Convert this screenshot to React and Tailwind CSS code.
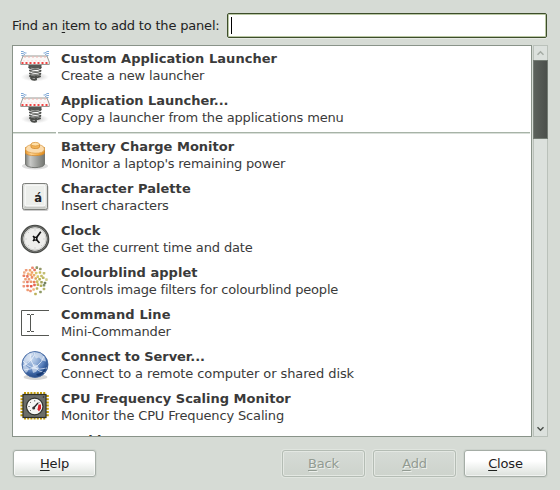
import React from "react";

const svgProps = { width: 32, height: 32, viewBox: "0 0 32 32", className: "block shrink-0" };

function LauncherIcon() {
  return (
    <svg {...svgProps}>
      <defs>
        <radialGradient id="springShadow">
          <stop offset="0" stopColor="#999" stopOpacity=".6" />
          <stop offset="1" stopColor="#aaa" stopOpacity="0" />
        </radialGradient>
      </defs>
      <ellipse cx="16" cy="26" rx="14" ry="4.5" fill="url(#springShadow)" />
      <g fill="none" stroke="#7fa8d6" strokeWidth="1">
        <path d="M2 .5h2l2 1.500h1.500M2 2.500h2l2 1.200M2.500 4.500h2M30 .5h-2l-2 1.500h-1.500M30 2.500h-2l-2 1.200M29.500 4.500h-2" />
      </g>
      <path d="M9.500 13.500h13v3.500h-13z" fill="#555753" />
      <g fill="none" strokeLinecap="round">
        <path d="M10.500 16.500q5.500 3 11 .3M11 19.500q5 3 10.500 .3M11 22.500q5 3 10.300 .3M11 25q5 2.500 10 .3M12 27q1 2 4 1.700M17 25v3.500" stroke="#4a4c49" strokeWidth="2" />
        <path d="M12 17.200q4 1.500 8 .2M12 20.200q4 1.500 8 .2M12 23.200q4 1.500 8 .2" stroke="#c4c6c2" strokeWidth=".7" />
      </g>
      <path d="M4 5h24l2.300 6v2.500H1.700V11z" fill="#fbf8f7" stroke="#989a96" />
      <path d="M5 6h22" stroke="#f3b4b0" strokeDasharray="2 2" />
      <path d="M2.500 12h27" stroke="#ef4545" strokeWidth="1.800" strokeDasharray="2 2" />
      <path d="M4 9.700h24" stroke="#f7d5d2" strokeWidth=".6" strokeDasharray="2 2" />
    </svg>
  );
}

function BatteryIcon() {
  return (
    <svg {...svgProps}>
      <defs>
        <linearGradient id="cell">
          <stop offset="0" stopColor="#7d7f7b" />
          <stop offset=".25" stopColor="#c9cac8" />
          <stop offset=".65" stopColor="#999b97" />
          <stop offset="1" stopColor="#747672" />
        </linearGradient>
        <linearGradient id="copper">
          <stop offset="0" stopColor="#e8962a" />
          <stop offset=".3" stopColor="#ffd391" />
          <stop offset=".7" stopColor="#f5a93c" />
          <stop offset="1" stopColor="#dd8a20" />
        </linearGradient>
      </defs>
      <ellipse cx="16" cy="27" rx="13" ry="3.500" fill="#ddd" />
      <path d="M6.500 9v16c0 4.800 19 4.800 19 0V9z" fill="url(#cell)" stroke="#6d6f6b" strokeWidth=".9" />
      <path d="M6.500 8.500v5.500c0 3.500 19 3.500 19 0V8.500z" fill="url(#copper)" stroke="#d0852a" strokeWidth=".7" />
      <path d="M6.500 10c0-6.300 19-6.300 19 0s-19 5-19 0z" fill="#fbdcae" stroke="#dca04e" strokeWidth=".8" />
      <path d="M12 5.500v2.500c0 2 8.500 2 8.500 0V5.500z" fill="#f4b558" stroke="#cf862a" strokeWidth=".8" />
      <ellipse cx="16.250" cy="5.200" rx="4.200" ry="1.800" fill="#ffe0a9" stroke="#d9953a" strokeWidth=".8" />
    </svg>
  );
}

function KeyIcon() {
  return (
    <svg {...svgProps}>
      <rect x="3.500" y="4" width="26" height="26" rx="2" fill="#ccc" />
      <rect x="3.500" y="2.500" width="25" height="26" rx="2" fill="#dcdedb" stroke="#7d7f7b" />
      <path d="M4.500 27.500l2-3h18l3 3z" fill="#c5c7c3" />
      <rect x="6" y="4" width="20" height="21" rx="1.500" fill="#eceeeb" stroke="#fff" />
      <text x="15.300" y="21" fontFamily="DejaVu Sans" fontSize="13" fontWeight="bold" textLength="7.800" lengthAdjust="spacingAndGlyphs" fill="#222">á</text>
    </svg>
  );
}

function ClockIcon() {
  return (
    <svg {...svgProps}>
      <circle cx="16" cy="16" r="13" fill="#eeeeec" stroke="#484a47" strokeWidth="2.600" />
      <circle cx="16" cy="16" r="12.800" fill="none" stroke="#858783" strokeWidth=".7" />
      <circle cx="16" cy="16" r="11" fill="none" stroke="#c5c7c3" strokeWidth=".8" />
      <path d="M16 6.500v1M16 24.500v1M6.500 16h1M24.500 16h1M9.300 9.300l.7.700M22 22l.7.700M9.300 22.700l.7-.7" stroke="#aaa" strokeWidth=".7" />
      <path d="M16.500 16l5.300-7.200M16.500 15.500l4 4.500M14 13l2.500 2.500M14 18l2.500-2.500" stroke="#111" strokeWidth="1.700" />
      <rect x="14.500" y="13.700" width="4" height="4" fill="#111" />
      <rect x="15.800" y="15.200" width="1.200" height="1.200" fill="#fff" />
    </svg>
  );
}

const DOTS = [
  [13.500, 2.800, "#e98a71"], [17.800, 2.600, "#8d9867"], [21.300, 4, "#96996a"],
  [7.200, 5.200, "#ee9b79"], [11, 5.300, "#f0a46a"], [15.600, 5, "#e6755f"],
  [5.300, 7.500, "#efac82"], [9.200, 8.800, "#f2b17d"], [13, 7.500, "#f0a05f"], [17.200, 8, "#d5ca74"], [21, 7.500, "#c6bb5a"], [25, 8.200, "#c2bd73"],
  [4.900, 10.800, "#ea8362"], [8.400, 11.400, "#e67560"], [11.800, 9.800, "#f2ad6d"], [15, 10.200, "#eeab68"], [18.800, 11.600, "#d4c66a"], [22.500, 11, "#c8bc69"],
  [6.500, 14.200, "#eea07a"], [10, 14.300, "#f0a075"], [13, 12.400, "#ec8c66"], [16.700, 13.500, "#dda85c"], [20.600, 14.200, "#b6ae4d"], [24.200, 12.800, "#bcb864"], [27.500, 14.600, "#d1cd8a"],
  [4.800, 17, "#f0b492"], [8.400, 17, "#e77b65"], [12, 16.800, "#ee9c70"], [15.200, 17, "#e98059"], [18.200, 16.600, "#c9bf63"], [22.500, 17.200, "#a5a35b"], [26, 18, "#768360"],
  [4.800, 21.200, "#ee9575"], [8.500, 21, "#e86e58"], [12.200, 21.200, "#e55645"], [15.500, 20, "#e86754"], [18.900, 19.600, "#bdb255"], [22, 20.700, "#b2ae53"], [25, 20.300, "#81906a"],
  [8.700, 25, "#ef9e75"], [11.500, 26, "#ec9071"], [14.600, 24.500, "#f1b17a"], [18, 23.500, "#bdb462"], [21.500, 27, "#8e9a67"], [25, 24, "#b7b66d"], [16.500, 29, "#bdb25b"],
];

function ColourDotsIcon() {
  return (
    <svg {...svgProps}>
      {DOTS.map(([x, y, fill], i) => (
        <rect key={i} x={x - 1.300} y={y - 1.300} width="2.600" height="2.600" rx=".7" fill={fill} />
      ))}
    </svg>
  );
}

function CommandIcon() {
  return (
    <svg {...svgProps}>
      <path d="M30 3.500H2.500v25H30" fill="none" stroke="#555753" />
      <path d="M8 7.500h3M12 7.500h3M8 24.500h3M12 24.500h3M11.500 8v16" fill="none" stroke="#555753" />
    </svg>
  );
}

function GlobeIcon() {
  return (
    <svg {...svgProps}>
      <defs>
        <radialGradient id="ocean" cx=".4" cy=".3" r=".75">
          <stop offset="0" stopColor="#7ea5d8" />
          <stop offset=".6" stopColor="#4a74b4" />
          <stop offset="1" stopColor="#1f427c" />
        </radialGradient>
        <radialGradient id="gloss" cx=".35" cy=".25" r=".6">
          <stop offset="0" stopColor="#fff" stopOpacity=".55" />
          <stop offset="1" stopColor="#fff" stopOpacity="0" />
        </radialGradient>
      </defs>
      <ellipse cx="16.500" cy="28" rx="12" ry="3" fill="#d5d5d5" />
      <circle cx="16" cy="15.500" r="13" fill="url(#ocean)" stroke="#3f629c" strokeWidth=".8" />
      <path d="M5 10l4-5 6-2-1 3-3 2 1 3-4 2-1 4 3 2-1 3-2 2-3-4zM17 3.500l5 1 4 4 1 4-4-1-3-3-3 1-2-3zM14 15l4 1 2 3-3 4-3 1-1-4z" fill="#c9d8ec" opacity=".75" />
      <path d="M4 17q11-6 12-14M5 21q16-1 20-14M11 5q1 16 15 19M4 12q9 11 24 7" fill="none" stroke="#edf4ff" strokeWidth=".9" opacity=".8" />
      <path d="M17 25q8-1 10-8-1 8-8 10z" fill="#173a73" />
      <circle cx="16" cy="15.500" r="12.500" fill="url(#gloss)" />
    </svg>
  );
}

function CpuIcon() {
  return (
    <svg {...svgProps}>
      <path d="M5 2.500h22M5 27h22" stroke="#c49d08" strokeWidth="3" strokeDasharray="2 1.200" />
      <path d="M3 4v22M28.300 4v22" stroke="#c49d08" strokeWidth="3" strokeDasharray="2 1.200" />
      <rect x="4" y="3.500" width="23" height="23" fill="#6b6d68" stroke="#2e302d" strokeWidth="1.200" />
      <circle cx="15.700" cy="15.500" r="8.300" fill="#f5f5f3" stroke="#31332f" strokeWidth="1.200" />
      <path d="M15.700 9v1.500M11 11l1 1M9.300 15.500h1.500M20.500 11l-1 1M11 20l1-1" stroke="#777" />
      <path d="M19.500 13.500h2.500v4l-2 3-1.500-2z" fill="#d6222a" />
      <path d="M15 16.500l4-4.500" stroke="#222" strokeWidth="1.300" />
      <circle cx="14.700" cy="17" r="1.500" fill="#333" />
      <circle cx="24.500" cy="6" r=".8" fill="#2e302d" />
    </svg>
  );
}

// Each entry: title, description, icon, title tracking, description tracking.
const LAUNCHERS = [
  ["Custom Application Launcher", "Create a new launcher", LauncherIcon, "tracking-[0.04px]", "tracking-[-0.19px]"],
  ["Application Launcher...", "Copy a launcher from the applications menu", LauncherIcon, "tracking-[-0.03px]", "tracking-[-0.17px]"],
];

const APPLETS = [
  ["Battery Charge Monitor", "Monitor a laptop's remaining power", BatteryIcon, "", "tracking-[-0.21px]"],
  ["Character Palette", "Insert characters", KeyIcon, "tracking-[0.05px]", "tracking-[-0.16px]"],
  ["Clock", "Get the current time and date", ClockIcon, "", "tracking-[-0.12px]"],
  ["Colourblind applet", "Controls image filters for colourblind people", ColourDotsIcon, "tracking-[0.05px]", "tracking-[-0.2px]"],
  ["Command Line", "Mini-Commander", CommandIcon, "tracking-[0.12px]", "tracking-[-0.12px]"],
  ["Connect to Server...", "Connect to a remote computer or shared disk", GlobeIcon, "tracking-[-0.06px]", "tracking-[-0.09px]"],
  ["CPU Frequency Scaling Monitor", "Monitor the CPU Frequency Scaling", CpuIcon, "", "tracking-[-0.15px]"],
  ["Deskbar", "", null, "", ""],
];

function Row({ item: [title, text, Icon, titleTracking, textTracking] }) {
  return (
    <li className="flex h-[42px] shrink-0 items-center pl-1.5">
      <div className="w-[42px] shrink-0">{Icon && <Icon />}</div>
      <div className="h-[34px] whitespace-nowrap leading-[17px]">
        <div className={"font-bold " + titleTracking}>{title}</div>
        <div className={textTracking}>{text}</div>
      </div>
    </li>
  );
}

function Button({ label, disabled = false }) {
  const look = disabled
    ? "border-[#b4bcb4] bg-linear-to-b from-[#d6dbd6] to-[#cdd3cc] text-[#929b92] shadow-[0_0_0_1px_#e0e5df,inset_0_0_0_1px_#e4e8e3] [text-shadow:1px_1px_0_#edf0ec]"
    : "border-[#a5ada6] bg-linear-to-b from-white from-40% to-[#dce1dc] text-[#1e211e] shadow-[0_0_0_1px_#ccd2cc,inset_0_0_0_1px_#ffffff99]";
  return (
    <button disabled={disabled} className={"flex h-[27px] w-[83px] items-center justify-center rounded-[3px] border tracking-[-0.15px] " + look}>
      <span><span className="underline underline-offset-2">{label[0]}</span>{label.slice(1)}</span>
    </button>
  );
}

export default function App() {
  return (
    <main className="flex h-[490px] w-[560px] flex-col overflow-hidden bg-[#d6dbd5] pt-[13px] pr-3 pb-[13px] pl-3 font-['DejaVu_Sans',sans-serif] text-[13px] text-[#3a3a3a]">
      <div className="flex h-[25px] items-center justify-between pr-px">
        <label className="whitespace-nowrap tracking-[-0.18px] text-[#222]">
          Find an <span className="underline underline-offset-2">i</span>tem to add to the panel:
        </label>
        <div className="flex h-[25px] w-[320px] items-center rounded-[2px] border border-[#3d4d2b] bg-white pl-[3px] shadow-[inset_0_0_0_1px_#bac8a4,0_1px_0_#e6eae4]">
          <span className="h-[17px] w-px bg-black" />
        </div>
      </div>

      <div className="mt-[7px] flex h-[392px] gap-px">
        <ul className="flex w-[520px] flex-col overflow-hidden border border-[#899389] bg-white">
          {LAUNCHERS.map((item) => <Row key={item[0]} item={item} />)}
          <li className="flex h-1 shrink-0 items-end gap-0.5 pr-px">
            <span className="h-0.5 w-[43px] border-t border-[#a7b3a7] bg-[#d9dfd9]" />
            <span className="h-0.5 flex-1 border-t border-[#a7b3a7] bg-[#d9dfd9]" />
          </li>
          {APPLETS.map((item) => <Row key={item[0]} item={item} />)}
        </ul>
        <div className="flex w-[15px] flex-col border border-[#bac1ba] bg-[#dce1dd]">
          <div className="flex h-3.5 items-center justify-center">
            <svg width="9" height="6" viewBox="0 0 9 6"><path d="M1.500 4.700l3-3 3 3" fill="none" stroke="#a5aca5" strokeWidth="1.500" /></svg>
          </div>
          <div className="-mx-px h-[79px] border border-[#747c74] bg-linear-to-r from-[#5c625c] to-[#4b4f4b]" />
          <div className="flex-1" />
          <div className="flex h-[15px] items-center justify-center">
            <svg width="9" height="6" viewBox="0 0 9 6"><path d="M1.500 1.300l3 3 3-3" fill="none" stroke="#4b504b" strokeWidth="1.500" /></svg>
          </div>
        </div>
      </div>

      <div className="mt-[13px] flex justify-between px-px">
        <Button label="Help" />
        <div className="flex gap-2">
          <Button label="Back" disabled />
          <Button label="Add" disabled />
          <Button label="Close" />
        </div>
      </div>
    </main>
  );
}
